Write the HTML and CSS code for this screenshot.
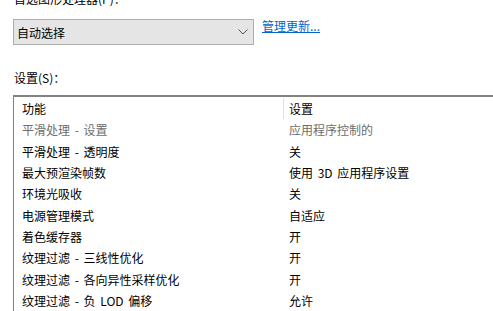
FILE: index.html
```html
<!DOCTYPE html>
<html>
<head>
<meta charset="utf-8">
<link rel="stylesheet" href="styles.css">
</head>
<body>
<div class="page">
  <div class="label top-label">首选图形处理器(P)：</div>
  <div class="gpu-row">
    <div class="select">
      <span>自动选择</span>
      <svg class="chev" width="10" height="6" viewBox="0 0 10 6"><path d="M0.5 0.5 L5 5 L9.5 0.5" fill="none" stroke="#555" stroke-width="1"/></svg>
    </div>
    <a class="link" href="#">管理更新...</a>
  </div>
  <div class="label settings-label">设置(S)：</div>
  <div class="table">
    <div class="row head"><div class="c1">功能</div><div class="c2 sep">设置</div></div>
    <div class="row dim"><div class="c1">平滑处理 - 设置</div><div class="c2">应用程序控制的</div></div>
    <div class="row"><div class="c1">平滑处理 - 透明度</div><div class="c2">关</div></div>
    <div class="row"><div class="c1">最大预渲染帧数</div><div class="c2">使用 3D 应用程序设置</div></div>
    <div class="row"><div class="c1">环境光吸收</div><div class="c2">关</div></div>
    <div class="row"><div class="c1">电源管理模式</div><div class="c2">自适应</div></div>
    <div class="row"><div class="c1">着色缓存器</div><div class="c2">开</div></div>
    <div class="row"><div class="c1">纹理过滤 - 三线性优化</div><div class="c2">开</div></div>
    <div class="row"><div class="c1">纹理过滤 - 各向异性采样优化</div><div class="c2">开</div></div>
    <div class="row"><div class="c1">纹理过滤 - 负 LOD 偏移</div><div class="c2">允许</div></div>
  </div>
</div>
</body>
</html>
```
FILE: styles.css
```css
html, body {
  margin: 0;
  padding: 0;
  background: #fff;
  overflow: hidden;
}
body {
  font-family: "Noto Sans CJK SC", "Noto Sans", sans-serif;
  font-size: 12px;
  color: #000;
}
.page {
  width: 493px;
  height: 311px;
  overflow: hidden;
  padding-left: 13px;
  box-sizing: border-box;
}
.label {
  line-height: 16px;
  padding-left: 1px;
}
.top-label {
  margin-top: -9px;
}
.gpu-row {
  display: flex;
  align-items: flex-start;
  margin-top: 12px;
}
.select {
  width: 241px;
  height: 26px;
  box-sizing: border-box;
  border: 1px solid #adadad;
  background: #e5e5e5;
  display: flex;
  align-items: center;
  justify-content: space-between;
  padding: 0 5px 0 3px;
}
.link {
  margin-left: 8px;
  margin-top: -1px;
  color: #0066cc;
  text-decoration: underline;
  line-height: 16px;
}
.settings-label {
  margin-top: 25px;
}
.table {
  margin-top: 9px;
  border-top: 2px solid #828282;
  border-left: 1px solid #828282;
  width: 520px;
  padding-top: 1px;
  word-spacing: 2px;
}
.row {
  display: flex;
  height: 21.3px;
  align-items: center;
}
.c1 {
  width: 269px;
  padding-left: 8px;
  box-sizing: border-box;
}
.c2 {
  padding-left: 6px;
}
.head .sep {
  border-left: 1px solid #e0e0e0;
  align-self: stretch;
  display: flex;
  align-items: center;
  padding-left: 5px;
}
.dim {
  color: #6d6d6d;
}
```
